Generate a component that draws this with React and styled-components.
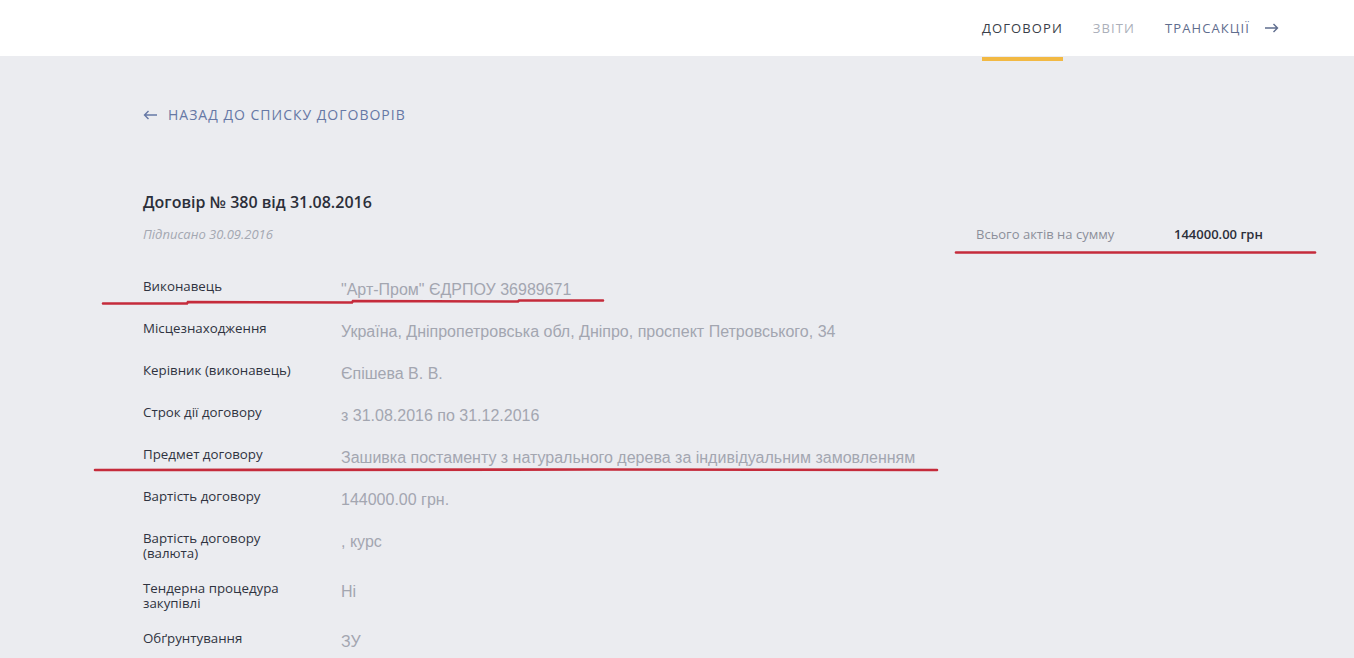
import React from 'react';
import styled, { createGlobalStyle } from 'styled-components';

const GlobalStyle = createGlobalStyle`
  html, body {
    margin: 0;
    padding: 0;
    background: #ebecf0;
  }
  body {
    font-family: "Open Sans", "Liberation Sans", sans-serif;
    -webkit-font-smoothing: antialiased;
  }
`;

const Page = styled.div`
  position: relative;
  width: 1354px;
  min-height: 658px;
  overflow: hidden;
  background: #ebecf0;
`;

const Header = styled.header`
  height: 56px;
  background: #fff;
  display: flex;
  justify-content: flex-end;
  align-items: center;
  padding-right: 75px;
`;

const Nav = styled.nav`
  display: flex;
  align-items: center;
  gap: 30px;
  height: 100%;
`;

const NavItem = styled.a`
  position: relative;
  display: flex;
  align-items: center;
  gap: 14px;
  height: 100%;
  font-size: 13px;
  letter-spacing: 1.1px;
  text-transform: uppercase;
  color: ${({ tone }) =>
    tone === 'active' ? '#3a3e49' : tone === 'muted' ? '#abafba' : '#5f6d8e'};

  &::after {
    content: '';
    display: ${({ tone }) => (tone === 'active' ? 'block' : 'none')};
    position: absolute;
    left: 0;
    right: 0;
    bottom: -5px;
    height: 4px;
    background: #f2b944;
  }
`;

const Main = styled.main`
  padding: 51px 143px 0;
`;

const BackLink = styled.a`
  display: flex;
  align-items: center;
  gap: 10px;
  font-size: 14px;
  line-height: 16px;
  letter-spacing: 1px;
  text-transform: uppercase;
  color: #6678a5;
`;

const Layout = styled.div`
  display: flex;
  margin-top: 69px;
`;

const Contract = styled.section`
  flex: 0 0 833px;
`;

const Title = styled.h1`
  margin: 0;
  font-size: 16px;
  line-height: 20px;
  font-weight: 600;
  color: #2b2f3a;
`;

const Signed = styled.div`
  margin-top: 14px;
  font-size: 13px;
  line-height: 16px;
  font-style: italic;
  color: #a4a8b2;
`;

const Rows = styled.div`
  margin-top: 27px;
`;

const Row = styled.div`
  display: flex;
  align-items: flex-start;
  padding: 10px 0;
`;

const Label = styled.div`
  flex: 0 0 198px;
  padding-right: 32px;
  box-sizing: border-box;
  font-size: 13.3px;
  line-height: 15px;
  color: #2f3340;
`;

const Value = styled.div`
  font-family: "Liberation Sans", Arial, sans-serif;
  font-size: 16px;
  line-height: 22px;
  color: #a3a6b0;
`;

const Summary = styled.aside`
  flex: none;
  display: flex;
  margin-top: 34px;
  font-size: 13px;
  line-height: 16px;
  height: 16px;
  white-space: nowrap;
`;

const SummaryLabel = styled.div`
  width: 198px;
  color: #8b8f9a;
`;

const SummaryValue = styled.div`
  font-weight: 600;
  color: #2b2f3a;
`;

const Marks = styled.svg`
  position: absolute;
  top: 0;
  left: 0;
  pointer-events: none;
`;

const rows = [
  ['Виконавець', '"Арт-Пром" ЄДРПОУ 36989671'],
  ['Місцезнаходження', 'Україна, Дніпропетровська обл, Дніпро, проспект Петровського, 34'],
  ['Керівник (виконавець)', 'Єпішева В. В.'],
  ['Строк дії договору', 'з 31.08.2016 по 31.12.2016'],
  ['Предмет договору', 'Зашивка постаменту з натурального дерева за індивідуальним замовленням'],
  ['Вартість договору', '144000.00 грн.'],
  ['Вартість договору (валюта)', ', курс'],
  ['Тендерна процедура закупівлі', 'Ні'],
  ['Обґрунтування', 'ЗУ'],
];

const Arrow = ({ dir }) => (
  <svg width="15" height="10" viewBox="0 0 15 10" fill="none" stroke="currentColor" strokeWidth="1.4">
    {dir === 'left' ? (
      <path d="M14 5H1.5M5.5 1L1.5 5l4 4" />
    ) : (
      <path d="M1 5h12.5M9.5 1l4 4-4 4" />
    )}
  </svg>
);

const App = () => {
  return (
    <Page>
      <GlobalStyle />
      <Header>
        <Nav>
          <NavItem tone="active">Договори</NavItem>
          <NavItem tone="muted">Звіти</NavItem>
          <NavItem>
            Трансакції
            <Arrow dir="right" />
          </NavItem>
        </Nav>
      </Header>
      <Main>
        <BackLink>
          <Arrow dir="left" />
          Назад до списку договорів
        </BackLink>
        <Layout>
          <Contract>
            <Title>Договір № 380 від 31.08.2016</Title>
            <Signed>Підписано 30.09.2016</Signed>
            <Rows>
              {rows.map(([label, value]) => (
                <Row key={label}>
                  <Label>{label}</Label>
                  <Value>{value}</Value>
                </Row>
              ))}
            </Rows>
          </Contract>
          <Summary>
            <SummaryLabel>Всього актів на сумму</SummaryLabel>
            <SummaryValue>144000.00 грн</SummaryValue>
          </Summary>
        </Layout>
      </Main>
      <Marks width="1354" height="658" viewBox="0 0 1354 658">
        <g stroke="#c52b3b" strokeWidth="2.6" fill="none" strokeLinecap="round">
          <path d="M103 303.5 L187 303.5 L188 302 L352 302.5 L353 301 L518 301.5 L519 300.5 L603 300.5" />
          <path d="M95 470 L600 469.5 L937 470" />
          <path d="M956 252.5 L1315 252.5" />
        </g>
      </Marks>
    </Page>
  );
};

export default App;
